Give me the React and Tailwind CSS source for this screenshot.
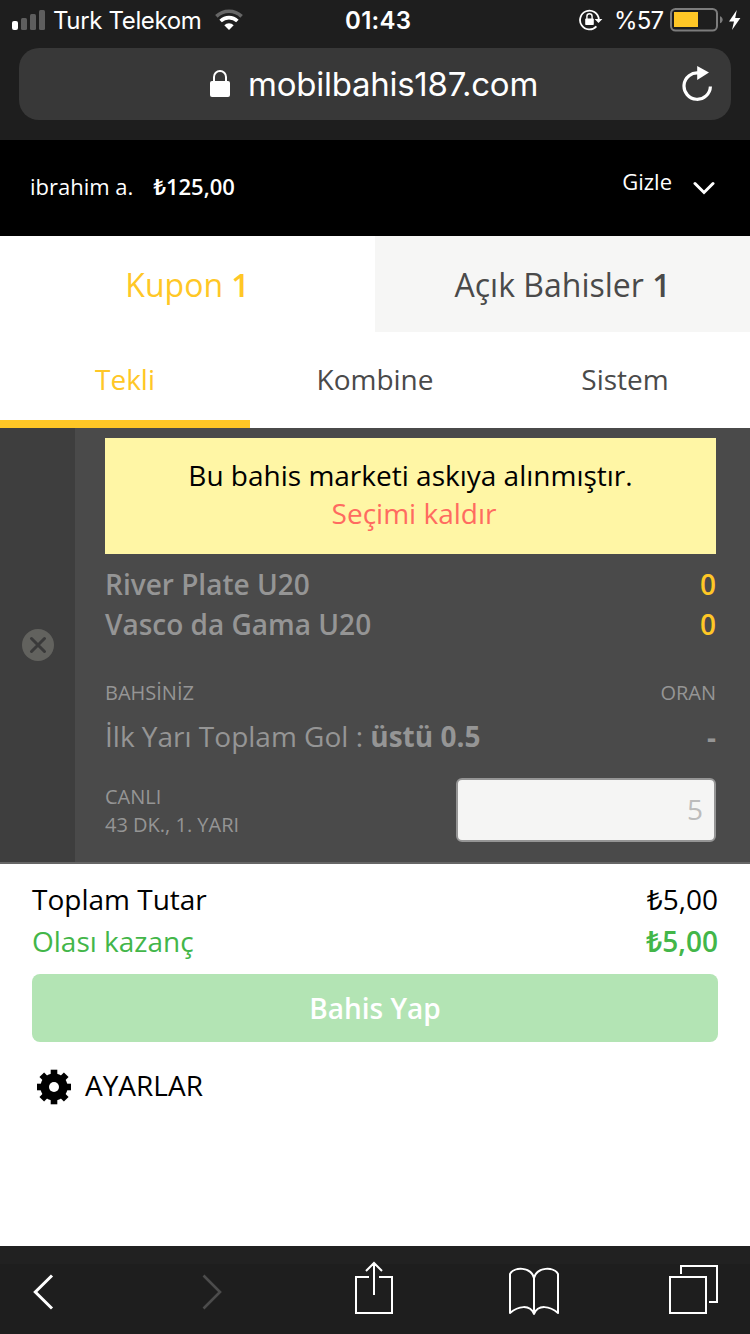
const SignalIcon = () => (
  <svg width="34" height="22" viewBox="0 0 34 22" className="shrink-0">
    <rect x="0" y="12" width="6" height="9" rx="2" fill="#fff" />
    <rect x="9" y="9" width="6" height="12" rx="1.5" fill="#5e5e5e" />
    <rect x="18" y="5" width="6" height="16" rx="1.5" fill="#5e5e5e" />
    <rect x="27" y="1" width="6" height="20" rx="1.5" fill="#5e5e5e" />
  </svg>
);

const WifiIcon = () => (
  <svg width="28" height="22" viewBox="0 0 28 22" className="shrink-0" fill="none">
    <path d="M1.4 7.4A18 18 0 0 1 26.6 7.4" stroke="#666" strokeWidth="3.6" />
    <path d="M5.6 12A12.2 12.2 0 0 1 22.4 12" stroke="#fff" strokeWidth="3.6" />
    <path d="M14 21L9.3 16.2A6.6 6.6 0 0 1 18.7 16.2Z" fill="#fff" />
  </svg>
);

const RotationLockIcon = () => (
  <svg width="24" height="22" viewBox="0 0 24 22" className="shrink-0" fill="none">
    <path d="M17.4 17.4A9.4 9.4 0 1 1 19.8 10" stroke="#fff" strokeWidth="1.8" />
    <path d="M15.6 10H23.4L19.5 14Z" fill="#fff" />
    <rect x="6.2" y="9.6" width="8.6" height="6.4" rx="0.8" fill="#fff" />
    <path d="M7.9 10.5V7.4A2.6 2.6 0 0 1 13.1 7.4V10.5" stroke="#fff" strokeWidth="1.4" />
  </svg>
);

const BatteryIcon = () => (
  <svg width="54" height="24" viewBox="0 0 54 24" className="shrink-0" fill="none">
    <rect x="1" y="1" width="46" height="21.5" rx="4.5" stroke="#7c7c7c" strokeWidth="2" />
    <rect x="4" y="4" width="24" height="15" fill="#ffc726" />
    <path d="M50 8.2C53.6 9.4 53.6 14 50 15.2Z" fill="#7c7c7c" />
  </svg>
);

const BoltIcon = () => (
  <svg width="12" height="20" viewBox="0 0 12 20" className="shrink-0">
    <path d="M7.8 0L0 11.4H5L3 20L11.4 8H6.2Z" fill="#fff" />
  </svg>
);

const LockIcon = () => (
  <svg width="20" height="28" viewBox="0 0 20 28" className="shrink-0" fill="none">
    <rect x="0" y="11" width="20" height="16" rx="2" fill="#fff" />
    <path d="M4 12V7A6 6 0 0 1 16 7V12" stroke="#fff" strokeWidth="2" />
  </svg>
);

const ReloadIcon = () => (
  <svg width="32" height="36" viewBox="0 0 32 36" className="shrink-0" fill="none">
    <path d="M17 7A13.2 13.2 0 1 0 28.4 20.5" stroke="#fff" strokeWidth="3.2" />
    <path d="M15.2 0L27 6.6L15.2 14Z" fill="#fff" />
  </svg>
);

const GearIcon = () => (
  <svg width="34" height="36" viewBox="-17 -18 34 36" className="shrink-0">
    {[0, 45, 90, 135].map((angle) => (
      <rect
        key={angle}
        x="-3.3"
        y="-17.3"
        width="6.6"
        height="34.6"
        transform={`rotate(${angle})`}
      />
    ))}
    <circle r="13.6" />
    <circle r="5" fill="#fff" />
  </svg>
);

const StatusBar = () => (
  <div className="flex h-10 items-center pl-3 font-['Inter',sans-serif] text-[24px] text-white">
    <SignalIcon />
    <span className="ml-[7px] w-[162px] whitespace-nowrap pt-0.5 tracking-[-0.35px]">Turk Telekom</span>
    <WifiIcon />
    <span className="ml-[102px] w-[234px] whitespace-nowrap pt-0.5 font-semibold tracking-[0.3px]">01:43</span>
    <RotationLockIcon />
    <span className="ml-[11px] w-14 whitespace-nowrap pt-0.5 tracking-[-0.8px]">%57</span>
    <BatteryIcon />
    <span className="ml-[5px]">
      <BoltIcon />
    </span>
  </div>
);

const AddressBar = () => (
  <div className="mx-[19px] mt-2 flex h-[72px] items-center rounded-[20px] bg-[#383838] pr-[17px] pl-[191px] font-['Inter',sans-serif] text-white">
    <LockIcon />
    <span className="ml-[18px] grow whitespace-nowrap pt-0.5 text-[33px] tracking-[-0.25px]">
      mobilbahis187.com
    </span>
    <ReloadIcon />
  </div>
);

const AccountBar = () => (
  <div className="flex h-24 bg-black pr-[35px] pl-[30px] text-[22px] leading-[93px] text-white">
    <span>ibrahim a.</span>
    <span className="ml-5 grow font-semibold">₺125,00</span>
    <span className="leading-[82px]">Gizle</span>
    <svg width="22" height="14" viewBox="0 0 22 14" className="mt-[41px] ml-[21px]" fill="none">
      <path d="M2 2.5L11 11.5L20 2.5" stroke="#fff" strokeWidth="3" strokeLinecap="round" />
    </svg>
  </div>
);

const CouponTabs = () => (
  <div className="grid h-24 grid-cols-2 text-center text-[32px] leading-[98px]">
    <div className="h-24 bg-white text-[#ffc726]">
      Kupon <span className="font-semibold">1</span>
    </div>
    <div className="h-24 bg-[#f6f6f5] text-[#4a4a4a]">
      Açık Bahisler <span className="font-semibold">1</span>
    </div>
  </div>
);

const TypeTabs = () => (
  <div className="grid h-24 grid-cols-3 bg-white text-center text-[28px] leading-[94px] text-[#4a4a4a]">
    <div className="h-24 border-b-8 border-[#ffc726] text-[#ffc726]">Tekli</div>
    <div>Kombine</div>
    <div>Sistem</div>
  </div>
);

const teams = [
  { name: "River Plate U20", score: 0 },
  { name: "Vasco da Gama U20", score: 0 },
];

const BetCard = () => (
  <div className="flex h-[436px] border-b-2 border-[#666] bg-[#4a4a4a] text-[#959595]">
    <div className="flex w-[75px] shrink-0 items-center justify-center bg-[#3e3e3e]">
      <svg width="32" height="32" viewBox="0 0 32 32" fill="none">
        <circle cx="16" cy="16" r="16" fill="#62625e" />
        <path d="M9.5 9.5L22.5 22.5M22.5 9.5L9.5 22.5" stroke="#3a3a3a" strokeWidth="3" strokeLinecap="round" />
      </svg>
    </div>

    <div className="grow pt-[10px] pr-[34px] pl-[30px]">
      <div className="h-[116px] bg-[#fff6a5] pt-[18px] text-center text-[28px] leading-[38px] text-black">
        <p>Bu bahis marketi askıya alınmıştır.</p>
        <p className="pl-[7px] text-[#ff6b60]">Seçimi kaldır</p>
      </div>

      <div className="mt-[10px] text-[28px] leading-10 font-semibold">
        {teams.map((team) => (
          <div key={team.name} className="flex justify-between">
            <span>{team.name}</span>
            <span className="text-[#ffc726]">{team.score}</span>
          </div>
        ))}
      </div>

      <div className="mt-[35px] flex justify-between text-[20px] leading-7">
        <span>BAHSİNİZ</span>
        <span>ORAN</span>
      </div>
      <div className="mt-[9px] flex justify-between text-[28px] leading-10">
        <span>
          İlk Yarı Toplam Gol : <span className="font-bold">üstü 0.5</span>
        </span>
        <span className="pt-px font-bold">-</span>
      </div>

      <div className="mt-[21px] flex items-center justify-between text-[20px] leading-7">
        <div className="pt-0.5">
          <p>CANLI</p>
          <p>43 DK., 1. YARI</p>
        </div>
        <input
          defaultValue="5"
          className="h-16 w-[260px] rounded-md border-2 border-[#959595] bg-[#f5f5f4] pr-[11px] pb-0.5 text-right text-[28px] text-[#bcbcbc] focus:outline-none"
        />
      </div>
    </div>
  </div>
);

const Summary = () => (
  <div className="grow bg-white px-8 pt-[14px] text-[28px] leading-[42px] text-black">
    <div className="flex justify-between">
      <span>Toplam Tutar</span>
      <span>₺5,00</span>
    </div>
    <div className="flex justify-between text-[#43b649]">
      <span>Olası kazanç</span>
      <span className="font-semibold">₺5,00</span>
    </div>
    <button className="mt-3 block h-[68px] w-full rounded-lg bg-[#b3e4b4] font-semibold text-white">
      Bahis Yap
    </button>
    <div className="mt-[22px] flex items-center gap-[14px] pl-[5px]">
      <span className="pt-1">
        <GearIcon />
      </span>
      <span>AYARLAR</span>
    </div>
  </div>
);

const BrowserToolbar = () => (
  <div className="flex h-[88px] bg-[linear-gradient(#212121_18px,#1e1e1e_18px)] pl-8 text-white">
    <svg width="22" height="88" viewBox="32 0 22 88" fill="none" stroke="currentColor">
      <path d="M52 29.5L35.3 46L52 62.5" strokeWidth="3" />
    </svg>
    <svg width="22" height="88" viewBox="201 0 22 88" className="ml-[147px]" fill="none" stroke="#4c4c4c">
      <path d="M203.5 29.5L220 46L203.5 62.5" strokeWidth="2.6" />
    </svg>
    <svg width="38" height="88" viewBox="355 0 38 88" className="ml-[132px]" fill="none" stroke="currentColor" strokeWidth="2">
      <path d="M369 31H356V67H392V31H379M374 49V17M366 25L374 17L382 25" />
    </svg>
    <svg width="50" height="88" viewBox="509 0 50 88" className="ml-[116px]" fill="none" stroke="currentColor" strokeWidth="2">
      <path
        d="M534 68V32C531 20.5 514 20.5 510 28V67C518 60 530 58 534 68C538 58 550 60 558 67V28C554 20.5 537 20.5 534 32"
        strokeLinejoin="round"
      />
    </svg>
    <svg width="50" height="88" viewBox="669 0 50 88" className="ml-[110px]" fill="none" stroke="currentColor" strokeWidth="2">
      <path d="M670 31H706V67H670ZM681 28V20H717V56H709" />
    </svg>
  </div>
);

const App = () => {
  return (
    <div className="flex h-[1334px] w-[750px] flex-col overflow-hidden bg-white font-['Open_Sans','Noto_Sans',sans-serif]">
      <div className="h-[140px] shrink-0 bg-[#1e1e1e]">
        <StatusBar />
        <AddressBar />
      </div>
      <AccountBar />
      <CouponTabs />
      <TypeTabs />
      <BetCard />
      <Summary />
      <BrowserToolbar />
    </div>
  );
};

export default App;
